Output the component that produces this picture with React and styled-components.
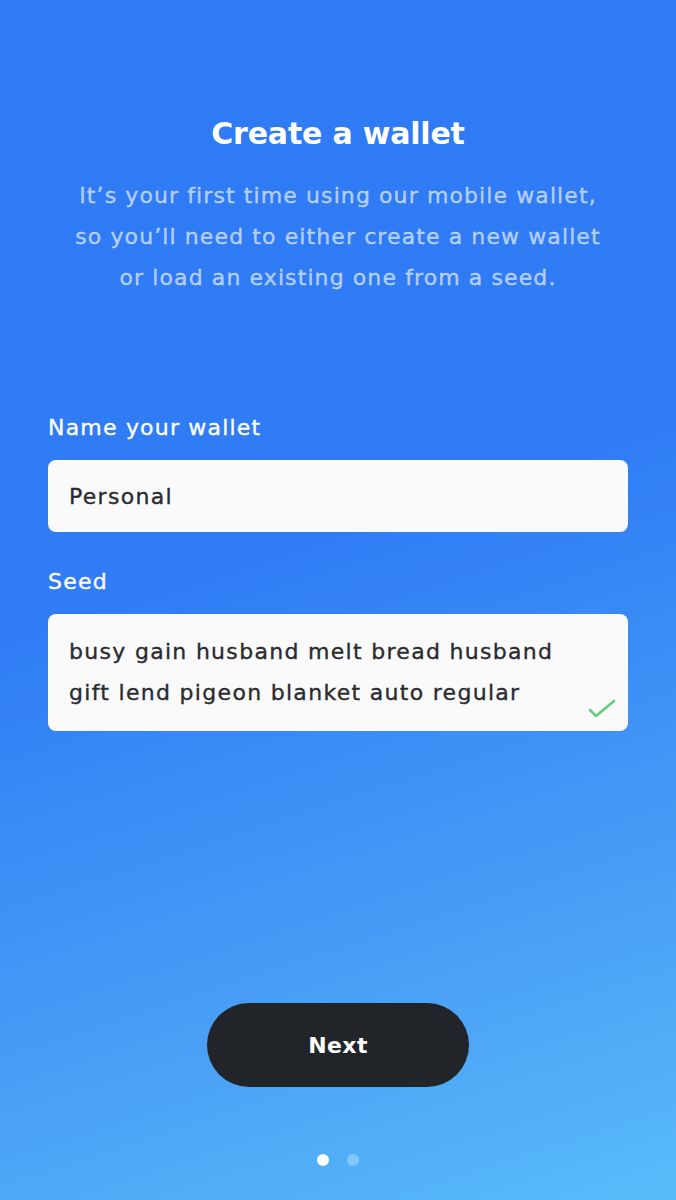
import React from 'react';
import styled, { createGlobalStyle } from 'styled-components';

const GlobalStyle = createGlobalStyle`
  html, body {
    margin: 0;
    padding: 0;
  }
  body {
    font-family: "DejaVu Sans", "Noto Sans", sans-serif;
    -webkit-font-smoothing: antialiased;
  }
`;

const Screen = styled.div`
  width: 676px;
  height: 1200px;
  box-sizing: border-box;
  padding: 114px 48px 34px;
  display: flex;
  flex-direction: column;
  background: linear-gradient(162deg, #2f7bf5 0%, #2f7cf5 45%, #4a9ff6 78%, #58bcf9 100%);
  color: #fff;
`;

const Header = styled.header`
  text-align: center;
`;

const Title = styled.h1`
  margin: 0;
  font-size: 30px;
  line-height: 40px;
  font-weight: 700;
  letter-spacing: -0.2px;
`;

const Intro = styled.p`
  margin: 21px 0 0;
  font-size: 22px;
  line-height: 41px;
  letter-spacing: 1.1px;
  color: rgba(255, 255, 255, 0.6);
  -webkit-text-stroke: 0.35px rgba(255, 255, 255, 0.6);
`;

const Form = styled.form`
  margin-top: 118px;
  display: flex;
  flex-direction: column;
`;

const Label = styled.label`
  display: block;
  font-size: 22px;
  line-height: 24px;
  letter-spacing: 1.2px;
  -webkit-text-stroke: 0.35px #fff;
  margin-top: ${p => (p.$first ? '0' : '38px')};
  margin-bottom: 20px;
`;

const Field = styled.div`
  position: relative;
  box-sizing: border-box;
  background: #fafafa;
  border-radius: 8px;
  padding: ${p => (p.$multi ? '17px 40px 18px 21px' : '0 21px')};
  height: ${p => (p.$multi ? 'auto' : '72px')};
  display: flex;
  align-items: center;
  color: #2a2b2e;
  font-size: 22px;
  line-height: 41px;
  letter-spacing: 1.3px;
  -webkit-text-stroke: 0.35px #2a2b2e;
  white-space: nowrap;
`;

const CheckMark = styled.svg`
  position: absolute;
  right: 11px;
  bottom: 10px;
`;

const Spacer = styled.div`
  flex: 1;
`;

const NextButton = styled.button`
  align-self: center;
  width: 262px;
  height: 84px;
  border: none;
  border-radius: 42px;
  background: #212428;
  color: #fff;
  font-family: inherit;
  font-size: 22px;
  font-weight: 700;
  letter-spacing: 0.4px;
  cursor: pointer;
`;

const Dots = styled.div`
  margin-top: 67px;
  display: flex;
  justify-content: center;
  gap: 18px;
`;

const Dot = styled.span`
  width: 12px;
  height: 12px;
  border-radius: 50%;
  background: ${p => (p.$active ? '#fff' : 'rgba(255, 255, 255, 0.3)')};
`;

export default function App() {
  return (
    <>
      <GlobalStyle />
      <Screen>
        <Header>
          <Title>Create a wallet</Title>
          <Intro>
            It’s your first time using our mobile wallet,<br />
            so you’ll need to either create a new wallet<br />
            or load an existing one from a seed.
          </Intro>
        </Header>
        <Form>
          <Label $first>Name your wallet</Label>
          <Field>Personal</Field>
          <Label>Seed</Label>
          <Field $multi>
            <div>
              busy gain husband melt bread husband<br />
              gift lend pigeon blanket auto regular
            </div>
            <CheckMark width="30" height="24" viewBox="0 0 30 24">
              <path d="M3 13 L9 19 L27 4" fill="none" stroke="#5fd07c" strokeWidth="2.6" strokeLinecap="round" strokeLinejoin="round" />
            </CheckMark>
          </Field>
        </Form>
        <Spacer />
        <NextButton type="button">Next</NextButton>
        <Dots>
          <Dot $active />
          <Dot />
        </Dots>
      </Screen>
    </>
  );
}
